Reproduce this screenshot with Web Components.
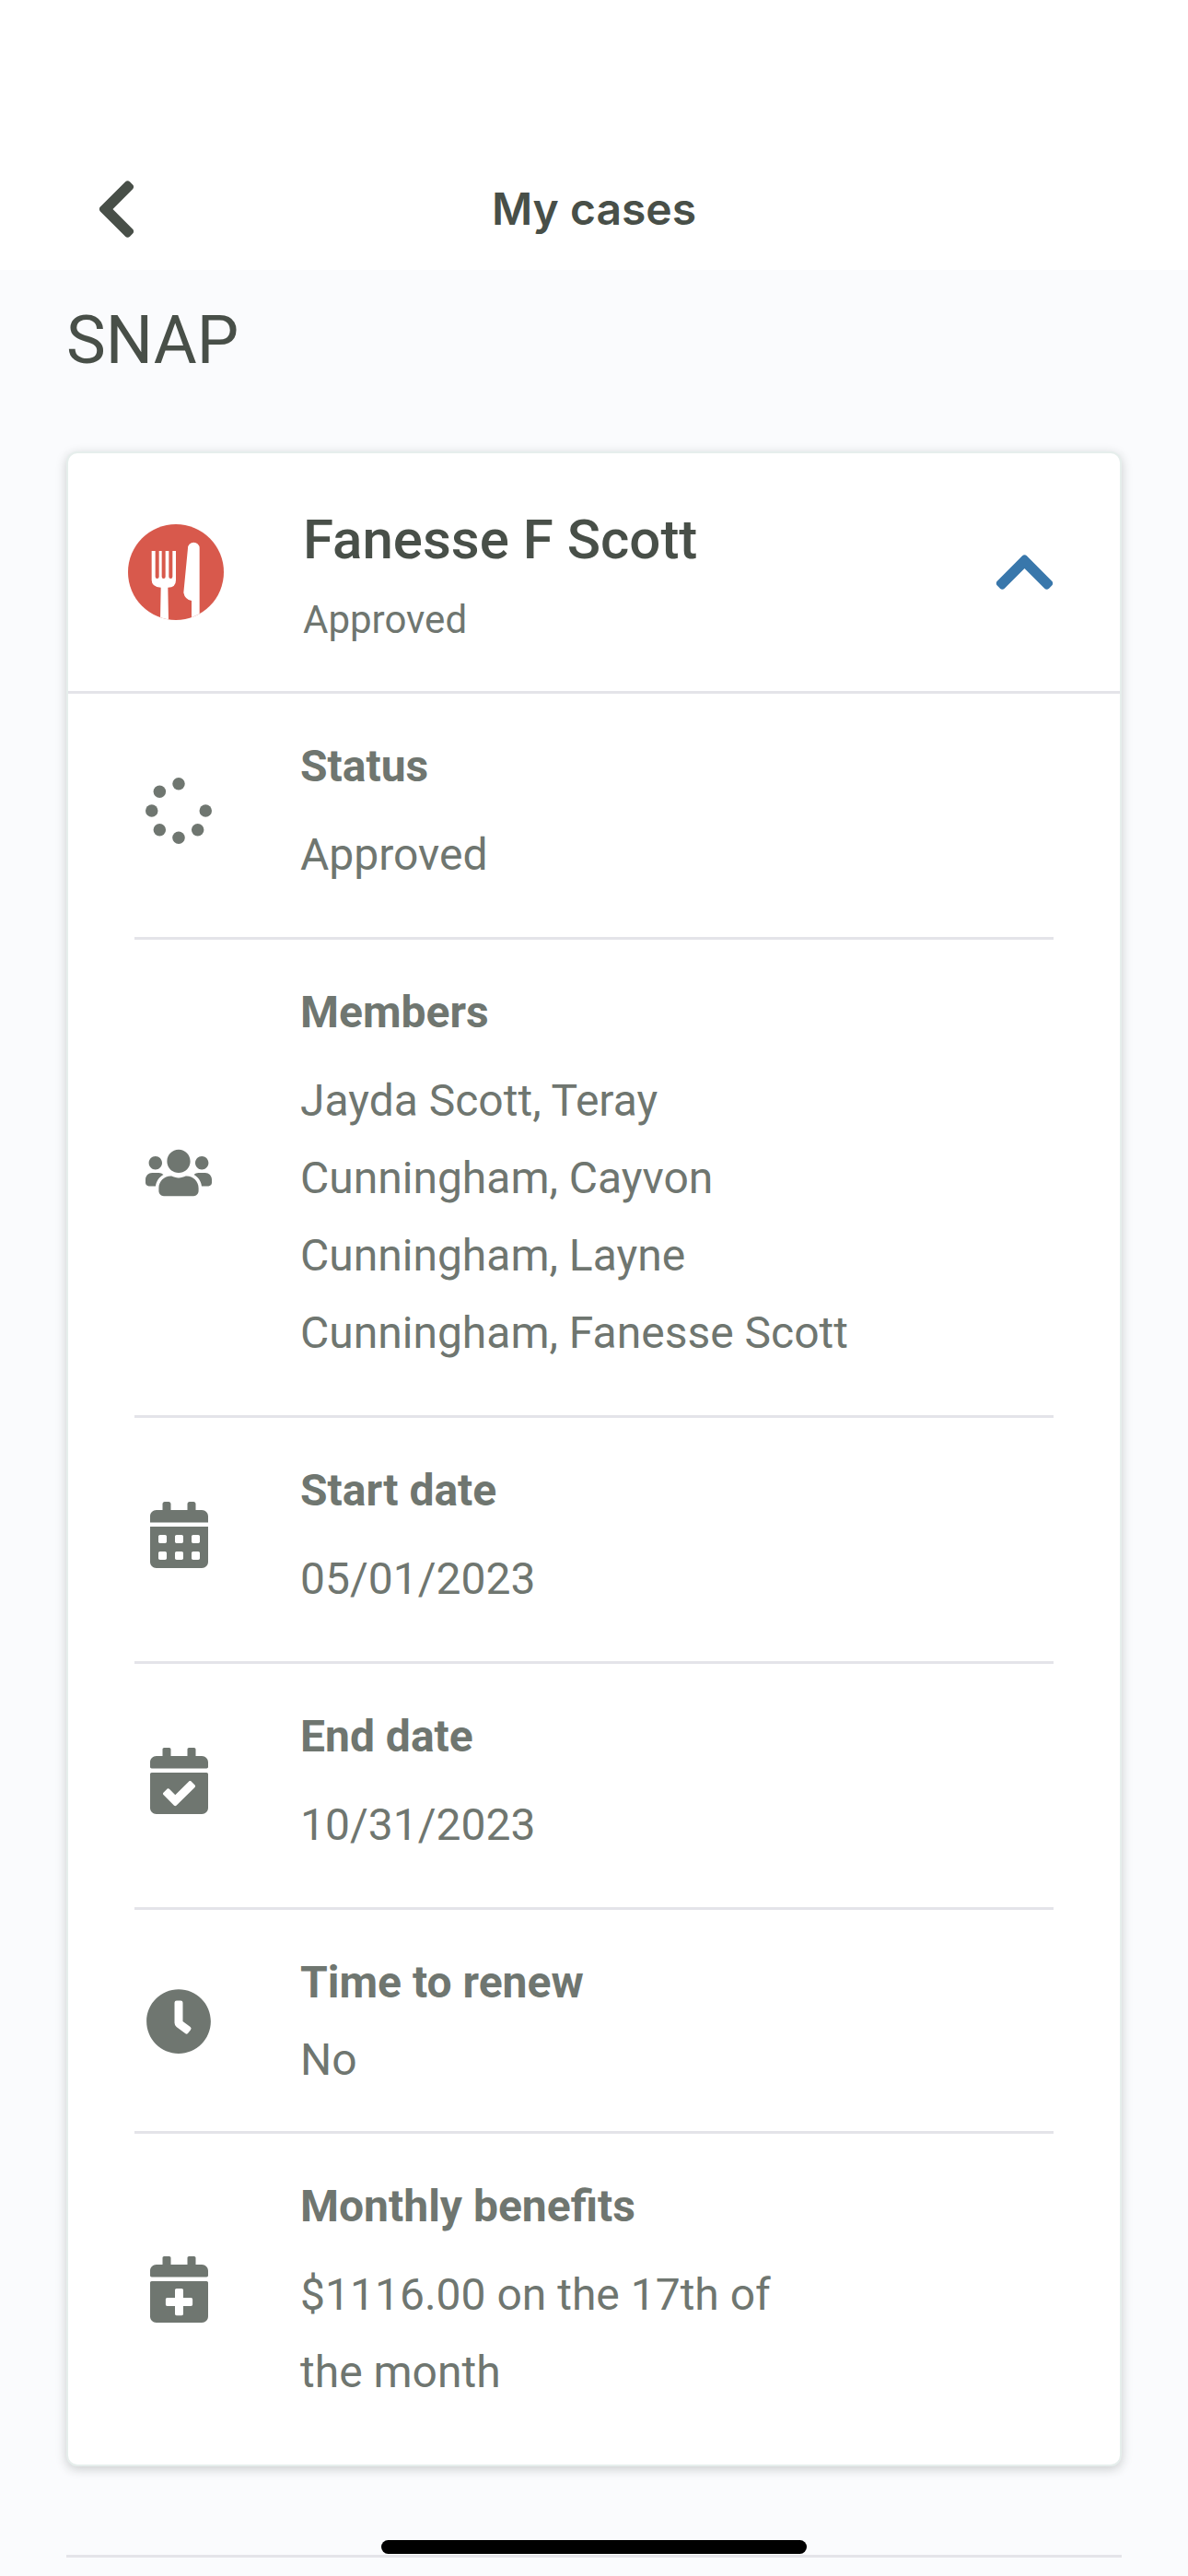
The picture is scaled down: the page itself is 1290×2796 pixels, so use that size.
<!DOCTYPE html>
<html lang="en">
<head>
<meta charset="utf-8">
<meta name="viewport" content="width=device-width, initial-scale=1">
<title>My cases</title>
<style>
  :root {
    --ink: #484f48;
    --muted: #6f7670;
    --line: #e4e4e9;
    --page: #fafbfd;
    --accent: #3977ab;
  }
  body {
    margin: 0;
    min-height: 100vh;
    background: var(--page);
    color: var(--muted);
    font-family: Roboto, "Liberation Sans", sans-serif;
    font-size: 48px;
    line-height: 84px;
  }
</style>
</head>
<body>
<app-bar>My cases</app-bar>
<case-program>
  <span slot="title">SNAP</span>
  <case-card>
    <span slot="name">Fanesse F Scott</span>
    <span slot="state">Approved</span>
    <case-row icon="spinner"><span slot="label">Status</span>Approved</case-row>
    <case-row icon="users"><span slot="label">Members</span>Jayda Scott, Teray Cunningham, Cayvon Cunningham, Layne Cunningham, Fanesse Scott</case-row>
    <case-row icon="calendar"><span slot="label">Start date</span>05/01/2023</case-row>
    <case-row icon="check"><span slot="label">End date</span>10/31/2023</case-row>
    <case-row icon="clock" compact><span slot="label">Time to renew</span>No</case-row>
    <case-row icon="plus"><span slot="label">Monthly benefits</span>$1116.00 on the 17th of<br>the month</case-row>
  </case-card>
</case-program>
<home-indicator></home-indicator>

<script>
const calendarFrame = 'M436 160H12c-6.6 0-12-5.4-12-12v-36c0-26.5 21.5-48 48-48h48V12c0-6.6 5.4-12 12-12h40c6.6 0 12 5.4 12 12v52h128V12c0-6.6 5.4-12 12-12h40c6.6 0 12 5.4 12 12v52h48c26.5 0 48 21.5 48 48v36c0 6.6-5.4 12-12 12zM12 192h424c6.6 0 12 5.4 12 12v260c0 26.5-21.5 48-48 48H48c-26.5 0-48-21.5-48-48V204c0-6.6 5.4-12 12-12z';
const dayHole = (x, y) => `M${x} ${y + 12}c0-6.6 5.4-12 12-12h40c6.6 0 12 5.4 12 12v40c0 6.6-5.4 12-12 12h-40c-6.6 0-12-5.4-12-12z`;
const svg = (box, body) => `<svg viewBox="${box}" fill="currentColor" fill-rule="evenodd" aria-hidden="true">${body}</svg>`;

const icons = {
  left: svg('0 0 320 512', '<path d="M34.52 239.03L228.87 44.69c9.37-9.37 24.57-9.37 33.94 0l22.67 22.67c9.36 9.36 9.37 24.52.04 33.9L131.49 256l154.02 154.75c9.34 9.38 9.32 24.54-.04 33.9l-22.67 22.67c-9.37 9.37-24.57 9.37-33.94 0L34.52 272.97c-9.37-9.37-9.37-24.57 0-33.94z"/>'),
  up: svg('0 0 448 512', '<path d="M240.971 130.524l194.343 194.343c9.373 9.373 9.373 24.569 0 33.941l-22.667 22.667c-9.357 9.357-24.522 9.375-33.901.04L224 227.495 69.255 381.516c-9.379 9.335-24.544 9.317-33.901-.04l-22.667-22.667c-9.373-9.373-9.373-24.569 0-33.941L207.03 130.525c9.372-9.373 24.568-9.373 33.941-.001z"/>'),
  spinner: svg('0 0 512 512', [[256,48],[256,464],[48,256],[464,256],[109,109],[109,403],[403,403]].map(([x, y]) => `<circle cx="${x}" cy="${y}" r="48"/>`).join('')),
  users: svg('0 0 640 512', '<path d="M96 224c35.3 0 64-28.7 64-64s-28.7-64-64-64-64 28.7-64 64 28.7 64 64 64zm448 0c35.3 0 64-28.7 64-64s-28.7-64-64-64-64 28.7-64 64 28.7 64 64 64zm32 32h-64c-17.6 0-33.5 7.1-45.1 18.6 40.3 22.1 68.9 62 75.1 109.4h66c17.7 0 32-14.3 32-32v-32c0-35.3-28.7-64-64-64zm-256 0c61.9 0 112-50.1 112-112S381.9 32 320 32 208 82.1 208 144s50.1 112 112 112zm76.8 32h-8.3c-20.8 10-43.9 16-68.5 16s-47.6-6-68.5-16h-8.3C179.6 288 128 339.6 128 403.2V432c0 26.5 21.5 48 48 48h288c26.5 0 48-21.5 48-48v-28.8c0-63.6-51.6-115.2-115.2-115.2zm-223.7-13.4C161.5 263.1 145.6 256 128 256H64c-35.3 0-64 28.7-64 64v32c0 17.7 14.3 32 32 32h65.9c6.3-47.4 34.9-87.3 75.2-109.4z"/>'),
  calendar: svg('0 0 448 512', `<path d="M400 64h-48V16c0-8.8-7.2-16-16-16h-32c-8.8 0-16 7.2-16 16v48H160V16c0-8.8-7.2-16-16-16h-32c-8.8 0-16 7.2-16 16v48H48C21.5 64 0 85.5 0 112v48h448v-48c0-26.5-21.5-48-48-48zM0 464c0 26.5 21.5 48 48 48h352c26.5 0 48-21.5 48-48V192H0z${[64,192,320].map(x => dayHole(x, 256) + dayHole(x, 384)).join('')}"/>`),
  check: svg('0 0 448 512', `<path d="${calendarFrame}M345.296 287.947l-28.169-28.398c-4.667-4.705-12.265-4.736-16.97-.068L194.12 364.665l-45.98-46.352c-4.667-4.705-12.266-4.736-16.971-.068l-28.397 28.17c-4.705 4.667-4.736 12.265-.068 16.97l82.601 83.269c4.667 4.705 12.265 4.736 16.97.068l142.953-141.805c4.705-4.667 4.736-12.265.068-16.97z"/>`),
  plus: svg('0 0 448 512', `<path d="${calendarFrame}M328 332c0-6.6-5.4-12-12-12h-60v-60c0-6.6-5.4-12-12-12h-40c-6.6 0-12 5.4-12 12v60h-60c-6.6 0-12 5.4-12 12v40c0 6.6 5.4 12 12 12h60v60c0 6.6 5.4 12 12 12h40c6.6 0 12-5.4 12-12v-60h60c6.6 0 12-5.4 12-12v-40z"/>`),
  clock: svg('0 0 512 512', '<path d="M256,8C119,8,8,119,8,256S119,504,256,504,504,393,504,256,393,8,256,8Zm92.49,313h0l-20,25a16,16,0,0,1-22.49,2.5h0l-67-49.72a40,40,0,0,1-15-31.23V112a16,16,0,0,1,16-16h32a16,16,0,0,1,16,16V256l58,42.5A16,16,0,0,1,348.49,321Z"/>'),
  food: `<svg viewBox="0 0 312 312" aria-hidden="true">
    <clipPath id="disc"><circle cx="156" cy="156" r="156"/></clipPath>
    <circle cx="156" cy="156" r="156" fill="#d8594c"/>
    <g clip-path="url(#disc)" fill="#fff">
      <path d="M77 87h12v84a6 6 0 0 0 12 0V87h9v84a6 6 0 0 0 12 0V87h11v84a6 6 0 0 0 12 0V87h11v95q0 24-26 24l2 106h-27l2-106q-30-2-30-24z"/>
      <path d="M195 78a19 19 0 0 1 38 0v234h-26V249q-22-4-26-26z"/>
    </g></svg>`
};

function define(name, css, html, setup) {
  const template = document.createElement('template');
  customElements.define(name, class extends HTMLElement {
    connectedCallback() {
      if (this.shadowRoot) return;
      template.innerHTML = `<style>*{box-sizing:border-box}svg{display:block}${css}</style>${html(this)}`;
      this.attachShadow({ mode: 'open' }).append(template.content.cloneNode(true));
      if (setup) setup(this.shadowRoot);
    }
  });
}

define('app-bar', `
  :host { display: block; background: #fff; padding-top: 161px; color: var(--ink); }
  header { display: grid; grid-template-columns: 1fr auto 1fr; align-items: center; height: 132px; padding: 0 72px; }
  button { justify-self: start; display: grid; place-items: center; width: 108px; height: 108px; padding: 0; border: 0; background: none; color: inherit; }
  svg { height: 72px; }
  h1 { margin: 0; font: 600 48px/84px Inter, "Liberation Sans", sans-serif; }
`, () => `<header><button type="button" aria-label="Back">${icons.left}</button><h1><slot></slot></h1></header>`);

define('case-program', `
  :host { display: block; padding: 33px 72px 20px; }
  h2 { margin: 0 0 76px; font-size: 72px; line-height: 88px; font-weight: 400; color: var(--ink); }
  hr { margin: 96px 0 0; border: 0; height: 3px; background: var(--line); }
`, () => `<section><h2><slot name="title"></slot></h2><slot></slot><hr></section>`);

define('case-card', `
  :host { display: block; background: #fff; border: 2px solid #e6eeec; border-radius: 12px; box-shadow: 0 3px 12px rgba(30, 40, 35, .22); }
  header { display: flex; align-items: center; height: 261px; padding: 0 60px 0 65px; border-bottom: 3px solid var(--line); }
  .badge { width: 104px; margin-right: 86px; }
  .who { flex: 1; display: flex; flex-direction: column; gap: 23px; }
  h3 { margin: 0; font-size: 60px; line-height: 80px; font-weight: 500; color: var(--ink); }
  p { margin: 0; font-size: 42px; line-height: 48px; }
  button { display: grid; place-items: center; width: 88px; height: 88px; padding: 0; border: 0; background: none; color: var(--accent); }
  button svg { height: 72px; }
  button[aria-expanded="false"] svg { rotate: 180deg; }
  .rows { padding: 0 72px 11px; }
  .rows[hidden] { display: none; }
`, () => `<header><div class="badge">${icons.food}</div>
  <div class="who"><h3><slot name="name"></slot></h3><p><slot name="state"></slot></p></div>
  <button type="button" aria-label="Case details" aria-expanded="true" aria-controls="rows">${icons.up}</button></header>
  <div class="rows" id="rows"><slot></slot></div>`,
root => {
  const button = root.querySelector('button');
  button.addEventListener('click', () => {
    const open = button.getAttribute('aria-expanded') !== 'true';
    button.setAttribute('aria-expanded', open);
    root.getElementById('rows').hidden = !open;
  });
});

define('case-row', `
  :host { display: flex; align-items: center; gap: 84px; padding: 37px 0 47px; border-bottom: 3px solid var(--line); }
  :host([compact]) { padding-bottom: 35px; }
  :host(:last-of-type) { border-bottom: 0; }
  .icon { flex: none; display: grid; place-items: center; width: 96px; height: 72px; }
  .icon svg { max-width: 72px; height: 72px; }
  .text { flex: 1; max-width: 624px; display: flex; flex-direction: column; gap: 12px; }
  :host([compact]) .text { gap: 0; }
  h4, p { margin: 0; font-size: 48px; line-height: 84px; }
  h4 { font-weight: 700; }
`, el => `<div class="icon">${icons[el.getAttribute('icon')]}</div>
  <div class="text"><h4><slot name="label"></slot></h4><p><slot></slot></p></div>`);

define('home-indicator', `
  :host { position: fixed; left: 50%; bottom: 24px; translate: -50%; width: 462px; height: 15px; border-radius: 8px; background: #000; }
`, () => '');
</script>
</body>
</html>
